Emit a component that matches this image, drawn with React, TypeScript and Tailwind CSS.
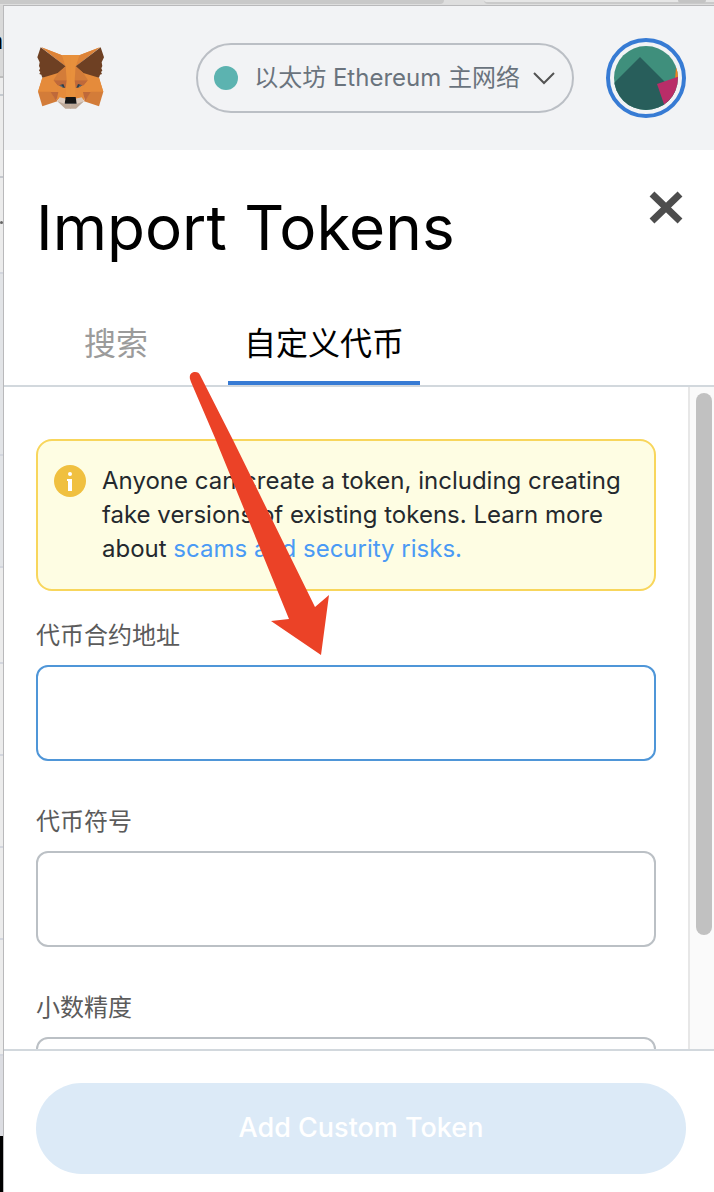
import { useState } from "react";

type Field = {
  id: string;
  label: string;
  active?: boolean;
};

const fields: Field[] = [
  { id: "address", label: "代币合约地址", active: true },
  { id: "symbol", label: "代币符号" },
  { id: "decimals", label: "小数精度" },
];

function FoxHalf() {
  return (
    <g>
      <path fill="#E58B3B" d="M212 166H186L124 142 197 199 127 233 114 275 175 293 212 300z" />
      <path fill="#DD8338" d="M124 142 186 166 197 199z" />
      <path fill="#E8903C" d="M186 165H213V292H197V200z" />
      <path fill="#6E4023" d="M122 142 197 199 174 219 127 233 124 224 118 222 121 216 117 212 120 205 117 198 119 187 112 172z" />
      <path fill="#D37C39" d="M197 199 200 241H160L174 219z" />
      <path fill="#BF693A" d="M160 241H200L197 264 172 256z" />
      <path fill="#E58B3B" d="M160 241 172 256 184 272 175 292 152 276 114 275 127 233z" />
      <path fill="#E58B3B" d="M172 257 197 264V294L180 293 170 304z" />
      <path fill="#D37C39" d="M114 275H152L172 304 127 319z" />
      <path fill="#BF693A" d="M152 276H175L169 304z" />
      <path fill="#DCCABD" d="M172 304 179 292 197 296 194 311 213 312V320H196z" />
      <path fill="#BDA999" d="M172 304 195 312H213V326H196z" />
      <path fill="#293E4D" d="M178 256 190 252 195 264 186 262z" />
      <path fill="#8A9298" d="M178 256 186 257 188 262z" />
    </g>
  );
}

function FoxLogo() {
  return (
    <svg viewBox="108 135 210 198" className="h-[66px] w-[70px]" aria-hidden="true">
      <FoxHalf />
      <g transform="translate(424 0) scale(-1 1)">
        <FoxHalf />
      </g>
      <path fill="#161616" d="M197 291H227L230 311H194z" />
    </svg>
  );
}

function Avatar() {
  return (
    <svg viewBox="0 0 64 64" className="size-16 rounded-full" aria-hidden="true">
      <path fill="#3F8F7C" d="M0 0H64V64H0z" />
      <path fill="#F3831F" d="M62 22 66 20V34H61z" />
      <path fill="#285E5B" d="M-6 43 26 11 74 59 50 90H-6z" />
      <path fill="#B92D68" d="M43 38 66 30V64H52z" />
    </svg>
  );
}

// slice of the browser page that stays visible beside the popup
function PageEdge() {
  return (
    <div className="flex w-[3px] shrink-0 flex-col overflow-hidden bg-[#ececec]" aria-hidden="true">
      <div className="h-[73px] border-b-2 border-[#bdbdbd] bg-[#d9d9d9] pt-[22px]">
        <div className="flex w-[3px] justify-end text-2xl leading-7 font-bold text-black">m</div>
      </div>
      <div className="h-[18px] border-b-2 border-[#c5cad0]" />
      <div className="h-[82px] border-b-2 border-[#c5c8ce]" />
      <div className="h-24 border-b-2 border-[#d3d6de] pt-[43px]">
        <div className="ml-auto size-[3px] rounded-full bg-[#666]" />
      </div>
      <div className="h-[182px] border-b-2 border-[#d3d6de] bg-[#e2e4e7]" />
      <div className="h-28 border-b-2 border-[#d3d6de] bg-[#e2e4e7]" />
      <div className="h-24 border-b-2 border-[#d3d6de]" />
      <div className="h-[92px] border-b-2 border-[#d3d6de]" />
      <div className="h-[92px] border-b-2 border-[#d3d6de]" />
      <div className="h-[92px] border-b-2 border-[#d3d6de]" />
      <div className="h-[116px] border-b-2 border-[#d3d6de]" />
      <div className="h-20 bg-[#dcdde2]" />
      <div className="flex-1 bg-black" />
    </div>
  );
}

function Arrow() {
  return (
    <svg
      viewBox="0 0 140 284"
      className="pointer-events-none absolute top-[372px] left-[189px] h-[284px] w-[140px]"
      aria-hidden="true"
    >
      <path
        fill="#EB4227"
        d="M1 7C0 2 3 0 6 0C9 0 10 1 11 3L44 68L126 235L140 223L132 283L82 249L100 247L26 66L2 10z"
      />
    </svg>
  );
}

export default function App() {
  const [tab, setTab] = useState("custom");
  const [values, setValues] = useState<Record<string, string>>({});

  return (
    <main className="relative flex h-screen flex-col bg-[#dedede] font-[Inter,'Noto_Sans_CJK_SC',sans-serif]">
      <div className="flex h-[5px] shrink-0 items-start justify-between overflow-hidden" aria-hidden="true">
        <div className="h-1 w-[444px] rounded-br bg-[#c9c9c9]" />
        <div className="flex h-1 w-[230px] justify-end rounded-bl-lg border-b-2 border-[#cacaca] bg-[#e6e6e6] pr-2">
          <div className="h-[3px] w-7 rounded-b-full bg-[#c4c4c4]" />
        </div>
      </div>

      <div className="flex min-h-0 flex-1">
        <PageEdge />

        <div className="flex min-w-0 flex-1 flex-col border-t border-l border-[#b9b9bb] bg-white">
          <header className="flex h-36 shrink-0 items-center justify-between bg-[#f2f3f5] pr-7 pl-8">
            <FoxLogo />
            <div className="flex items-center gap-8">
              <button
                type="button"
                className="flex h-[70px] items-center rounded-full border-2 border-[#bbbfc5] px-4 text-2xl text-[#6a737d]"
              >
                <span className="mr-4 size-6 rounded-full bg-[#5cb3b0]" />
                <span className="whitespace-nowrap">以太坊 Ethereum 主网络</span>
                <svg viewBox="0 0 24 14" className="ml-3 h-[14px] w-6" fill="none" aria-hidden="true">
                  <path d="M2 2 12 12 22 2" stroke="#535353" strokeWidth="2" />
                </svg>
              </button>
              <button
                type="button"
                aria-label="Account"
                className="flex size-20 items-center justify-center rounded-full border-4 border-[#377bd4]"
              >
                <Avatar />
              </button>
            </div>
          </header>

          <div className="flex shrink-0 items-start justify-between pt-9 pr-7 pl-8">
            <h1 className="text-[62px] leading-[84px] text-black">Import Tokens</h1>
            <button type="button" aria-label="Close" className="py-1">
              <svg viewBox="0 0 40 36" className="h-9 w-10" aria-hidden="true">
                <path d="M6 4 34 31M34 4 6 31" stroke="#4d4d4d" strokeWidth="7" />
              </svg>
            </button>
          </div>

          <div role="tablist" className="mt-8 flex shrink-0 gap-8 border-b-2 border-[#d2d8dd] pl-8">
            <button
              type="button"
              role="tab"
              aria-selected={tab === "search"}
              onClick={() => setTab("search")}
              className="h-[83px] w-40 border-b-4 border-transparent pt-1 text-[32px] text-[#9b9b9b] aria-selected:border-[#377bd4] aria-selected:text-black"
            >
              搜索
            </button>
            <button
              type="button"
              role="tab"
              aria-selected={tab === "custom"}
              onClick={() => setTab("custom")}
              className="h-[83px] w-48 border-b-4 border-transparent pt-1 text-[32px] text-[#9b9b9b] aria-selected:border-[#377bd4] aria-selected:text-black"
            >
              自定义代币
            </button>
          </div>

          <div className="flex min-h-0 flex-1">
            <div className="min-w-0 flex-1 overflow-hidden px-8 pt-[52px]">
              <div className="flex rounded-2xl border-2 border-[#f8d65c] bg-[#fefde3] px-4 py-[23px]">
                <svg viewBox="0 0 32 32" className="mt-px mr-4 size-8 shrink-0" aria-hidden="true">
                  <circle cx="16" cy="16" r="16" fill="#F0C040" />
                  <circle cx="16" cy="9" r="2" fill="#fff" />
                  <path d="M13 14H18V26H14V16H13z" fill="#fff" />
                </svg>
                <p className="text-2xl leading-[34px] text-[#24292e]">
                  Anyone can create a token, including creating fake versions of existing tokens.
                  Learn more about{" "}
                  <a href="#risks" className="text-[#4a9af5]">
                    scams and security risks.
                  </a>
                </p>
              </div>

              <form className="mt-7 flex flex-col gap-11">
                {fields.map((field) => (
                  <div key={field.id} className="flex flex-col gap-3">
                    <label htmlFor={field.id} className="text-2xl leading-[34px] text-[#5b5b5b]">
                      {field.label}
                    </label>
                    <input
                      id={field.id}
                      type="text"
                      value={values[field.id] || ""}
                      onChange={(event) => setValues({ ...values, [field.id]: event.target.value })}
                      className={`h-24 w-full rounded-xl border-2 bg-white px-4 text-2xl outline-none ${
                        field.active ? "border-[#4f96d8]" : "border-[#bbc0c5]"
                      }`}
                    />
                  </div>
                ))}
              </form>
            </div>

            <div className="w-[26px] shrink-0 border-l-2 border-[#e7e7e7] bg-[#fafafa] px-[6px] py-[6px]">
              <div className="h-5/6 w-4 rounded-full bg-[#c1c1c1]" />
            </div>
          </div>

          <footer className="shrink-0 border-t-2 border-[#d2d8dd] pt-8 pr-7 pb-[18px] pl-8">
            <button
              type="button"
              disabled
              className="h-[91px] w-full rounded-full bg-[#dceaf7] text-[27px] font-medium text-white"
            >
              Add Custom Token
            </button>
          </footer>
        </div>
      </div>

      <Arrow />
    </main>
  );
}
